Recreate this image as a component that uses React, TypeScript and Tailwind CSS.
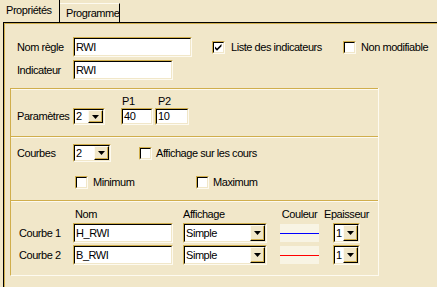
import React from "react";

function Inset({ className = "", children }: { className?: string; children?: React.ReactNode }) {
  return (
    <div className={`flex border border-t-[#d0ae4c] border-l-[#d0ae4c] border-r-[#fdfaf0] border-b-[#fdfaf0] ${className}`}>
      <div className="flex flex-1 min-w-0 border border-t-black border-l-black border-r-[#f1e7c9] border-b-[#f1e7c9] bg-white">
        {children}
      </div>
    </div>
  );
}

function Field({ className, value }: { className: string; value: string }) {
  return (
    <Inset className={className}>
      <span className="flex items-center pl-[1px]">{value}</span>
    </Inset>
  );
}

function Select({ className, value }: { className: string; value: string }) {
  return (
    <Inset className={className}>
      <span className="flex flex-1 items-center pl-[1px]">{value}</span>
      <div className="flex w-[15px] items-center justify-center border border-t-[#fdfaf0] border-l-[#fdfaf0] border-r-black border-b-black bg-[#f1e7c9] shadow-[inset_-1px_-1px_0_#d0ae4c]">
        <svg width="7" height="4" viewBox="0 0 7 4">
          <path d="M0 0h7L3.5 4z" fill="black" />
        </svg>
      </div>
    </Inset>
  );
}

function Check({ checked = false }: { checked?: boolean }) {
  return (
    <Inset className="h-[13px] w-[13px] shrink-0">
      {checked && (
        <svg width="9" height="9" viewBox="0 0 9 9" className="m-auto">
          <path d="M1 3.5l2 2 4.5-4.5v2.2L3 7.7 1 5.7z" fill="black" />
        </svg>
      )}
    </Inset>
  );
}

function CourbeRow({ label, name, color }: { label: string; name: string; color: string }) {
  return (
    <div className="flex h-[20px] items-center">
      <div className="w-[54px]">{label}</div>
      <Field className="h-[20px] w-[100px]" value={name} />
      <Select className="ml-[10px] h-[20px] w-[84px]" value="Simple" />
      <div className="ml-[13px] h-[18px] w-[39px] bg-[#f8f4e4]">
        <svg width="39" height="18" viewBox="0 0 39 18" className="block">
          <line x1="0" y1="9.5" x2="39" y2="9.5" stroke={color} strokeWidth="1" />
        </svg>
      </div>
      <Select className="ml-[14px] h-[20px] w-[27px]" value="1" />
    </div>
  );
}

export default function App() {
  return (
    <div className="flex h-[287px] w-[437px] flex-col overflow-hidden bg-[#f1e7c9] font-['Liberation_Sans',Arial,sans-serif] text-[11px] leading-[13px] tracking-[-0.45px] text-black">
      <div className="flex h-[22px] items-end">
        <div className="h-[22px] w-[60px] border-r border-r-black pl-[6px] pt-[4px]">Propriétés</div>
        <div className="h-[19px] w-[60px] border-t border-r border-t-[#fdfaf0] border-r-black pl-[6px] pt-[3px]">Programme</div>
      </div>

      <div className="ml-[3px] flex-1 border-l border-t border-black">
        <div className="h-full border-l border-t border-[#d0ae4c] pt-[13px]">
          <div className="flex h-[20px] items-center pl-[12px]">
            <div className="w-[56px]">Nom règle</div>
            <Field className="h-[20px] w-[119px]" value="RWI" />
            <div className="ml-[20px] flex w-[131px] items-center">
              <Check checked />
              <span className="ml-[6px]">Liste des indicateurs</span>
            </div>
            <Check />
            <span className="ml-[5px]">Non modifiable</span>
          </div>
          <div className="mt-[3px] flex h-[20px] items-center pl-[12px]">
            <div className="w-[56px]">Indicateur</div>
            <Field className="h-[20px] w-[100px]" value="RWI" />
          </div>

          <div className="ml-[5px] mt-[8px] w-[369px] border-l border-r border-b border-l-[#d0ae4c] border-r-[#fdfaf0] border-b-[#fdfaf0]">
            <section className="flex items-end border-t border-t-[#d0ae4c] pt-[6px] pb-[11px] pl-[6px] shadow-[inset_0_1px_0_#fdfaf0]">
              <div className="flex h-[17px] w-[56px] items-center">Paramètres</div>
              <Select className="h-[17px] w-[32px]" value="2" />
              <div className="ml-[16px] flex flex-col">
                <span className="pl-[1px]">P1</span>
                <Field className="h-[17px] w-[32px]" value="40" />
              </div>
              <div className="ml-[2px] flex flex-col">
                <span className="pl-[3px]">P2</span>
                <Field className="h-[17px] w-[34px]" value="10" />
              </div>
            </section>

            <section className="border-t border-t-[#d0ae4c] pt-[7px] pb-[11px] pl-[6px] shadow-[inset_0_1px_0_#fdfaf0]">
              <div className="flex h-[18px] items-center">
                <div className="w-[56px]">Courbes</div>
                <Select className="h-[18px] w-[38px]" value="2" />
                <div className="ml-[28px]">
                  <Check />
                </div>
                <span className="ml-[4px]">Affichage sur les cours</span>
              </div>
              <div className="mt-[14px] flex h-[13px] items-center pl-[58px]">
                <div className="flex w-[121px] items-center">
                  <Check />
                  <span className="ml-[5px]">Minimum</span>
                </div>
                <Check />
                <span className="ml-[4px]">Maximum</span>
              </div>
            </section>

            <section className="border-t border-t-[#d0ae4c] pt-[7px] pb-[10px] pl-[8px] shadow-[inset_0_1px_0_#fdfaf0]">
              <div className="flex h-[13px] items-center">
                <div className="w-[54px]" />
                <div className="w-[100px] pl-[2px]">Nom</div>
                <div className="ml-[10px] w-[84px]">Affichage</div>
                <div className="ml-[13px] flex w-[39px] justify-center whitespace-nowrap">Couleur</div>
                <div className="ml-[14px] flex w-[27px] justify-center whitespace-nowrap">Epaisseur</div>
              </div>
              <div className="mt-[2px] flex flex-col gap-[2px]">
                <CourbeRow label="Courbe 1" name="H_RWI" color="#0000ff" />
                <CourbeRow label="Courbe 2" name="B_RWI" color="#ff0000" />
              </div>
            </section>
          </div>
        </div>
      </div>
    </div>
  );
}
